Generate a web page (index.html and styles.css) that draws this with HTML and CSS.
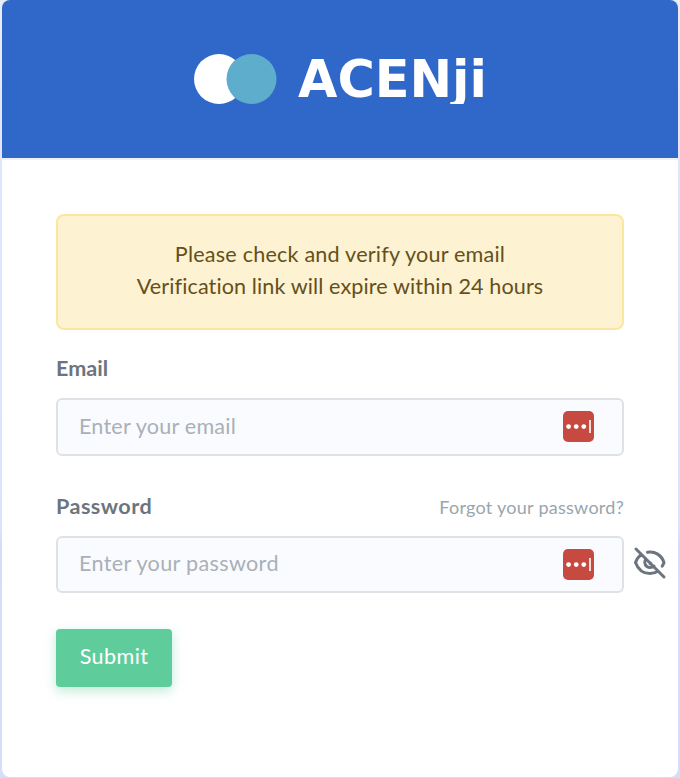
FILE: index.html
```html
<!DOCTYPE html>
<html lang="en">
<head>
<meta charset="utf-8">
<title>ACENji</title>
<link rel="stylesheet" href="styles.css">
</head>
<body>
<main class="card">
  <header class="card-header">
    <svg class="logo" width="292" height="50" viewBox="0 0 292 50" role="img" aria-label="ACENji">
      <circle cx="25" cy="25" r="25" fill="#fff"/>
      <circle cx="57.5" cy="25" r="25" fill="#5eadcd"/>
      <text class="logo-text" x="104" y="42.500" textLength="189" lengthAdjust="spacingAndGlyphs">ACENji</text>
    </svg>
  </header>
  <form class="card-body">
    <div class="alert"><span class="line-one">Please check and verify your email</span><br><span class="line-two">Verification link will expire within 24 hours</span></div>
    <label class="label label-email" for="email">Email</label>
    <div class="field">
      <input class="input input-email" id="email" type="email" placeholder="Enter your email">
      <svg class="manager" width="31" height="31" viewBox="0 0 31 31"><rect width="31" height="31" rx="5" fill="#c74a40"/><g fill="#fff"><circle cx="5.6" cy="15.6" r="2.4"/><circle cx="13.2" cy="15.6" r="2.4"/><circle cx="20.8" cy="15.6" r="2.4"/><path opacity=".8" d="M26 9h2v13h-2z"/></g></svg>
    </div>
    <div class="label-row">
      <label class="label label-password" for="password">Password</label>
      <a class="forgot">Forgot your password?</a>
    </div>
    <div class="field field-password">
      <input class="input input-password" id="password" type="password" placeholder="Enter your password">
      <svg class="manager" width="31" height="31" viewBox="0 0 31 31"><rect width="31" height="31" rx="5" fill="#c74a40"/><g fill="#fff"><circle cx="5.6" cy="15.6" r="2.4"/><circle cx="13.2" cy="15.6" r="2.4"/><circle cx="20.8" cy="15.6" r="2.4"/><path opacity=".8" d="M26 9h2v13h-2z"/></g></svg>
      <svg class="eye" width="34" height="34" viewBox="0 0 34 34" fill="none" stroke="#6c757d" stroke-width="3" stroke-linecap="round" stroke-linejoin="round"><path d="M3 3 31 31M8.500 8.500C5.500 10.500 3.500 13.500 2.500 16.500c2.500 7 8 11 14.500 11 3 0 6-1 8-2.500M14.500 6.300C22 5 28.500 9 31 16.500c-.5 1.500-1 2.500-1.800 3.700M12.500 13.500C10.500 17 12.500 21.500 17 21.500c1.500 0 3-.5 4-1.500M17 16.500v1h1"/></svg>
    </div>
    <button class="submit" type="button">Submit</button>
  </form>
</main>
</body>
</html>
```
FILE: styles.css
```css
* { box-sizing: border-box; }
body {
  margin: 0;
  padding: 0 2px 1px;
  height: 778px;
  overflow: hidden;
  background: linear-gradient(#e9edf9, #dfe4fa 25%, #dde3fa 68%, #d3dcf9 70%, #d5def9);
  font-family: Lato, sans-serif;
  font-size: 21.6px;
  color: #6c757d;
}
.card { height: 777px; background: #fff; border-radius: 8px; overflow: hidden; }
.card-header {
  height: 160px;
  padding: 54px 0 0 192px;
  background: #2f68c8;
  border-bottom: 2px solid #eef2f7;
}
.logo { display: block; }
.logo-text { font: bold 51px "DejaVu Sans", sans-serif; fill: #fff; }
.card-body { padding: 54px 54px 0; }
.alert {
  height: 116px;
  padding: 22px 0;
  border: 2px solid #fbe6a0;
  border-radius: 8px;
  background: #fdf2d1;
  color: #65501b;
  line-height: 32px;
  text-align: center;
}
.line-one { letter-spacing: .2px; }
.line-two { letter-spacing: .1px; }
.label { display: block; font-weight: bold; line-height: 32px; }
.label-email { margin: 22px 0 14px; }
.label-password { letter-spacing: .45px; position: relative; top: -1px; }
.field { display: flex; align-items: center; height: 58px; position: relative; }
.field-password { height: 57px; }
.input {
  width: 100%;
  height: 100%;
  padding: 0 21px 2px;
  border: 2px solid #dee2e6;
  border-radius: 6px;
  background: #fafbfe;
  font: inherit;
  letter-spacing: .2px;
}
.input-password { padding-bottom: 3px; letter-spacing: .32px; }
.input::placeholder { color: #a9b0b8; opacity: 1; }
.manager { position: absolute; right: 30px; top: 13px; }
.eye { position: absolute; right: -43px; top: 10px; }
.label-row { display: flex; justify-content: space-between; align-items: center; margin: 35px 0 13px; height: 32px; }
.forgot { font-size: 18px; letter-spacing: .27px; color: #98a6ad; }
.submit {
  display: block;
  width: 116px;
  height: 58px;
  margin-top: 36px;
  padding: 0 0 5px;
  border: 0;
  border-radius: 4px;
  background: #5fcd9b;
  box-shadow: 0 4px 12px rgba(95, 205, 155, .4);
  color: #fff;
  font: inherit;
  letter-spacing: .4px;
}
```
